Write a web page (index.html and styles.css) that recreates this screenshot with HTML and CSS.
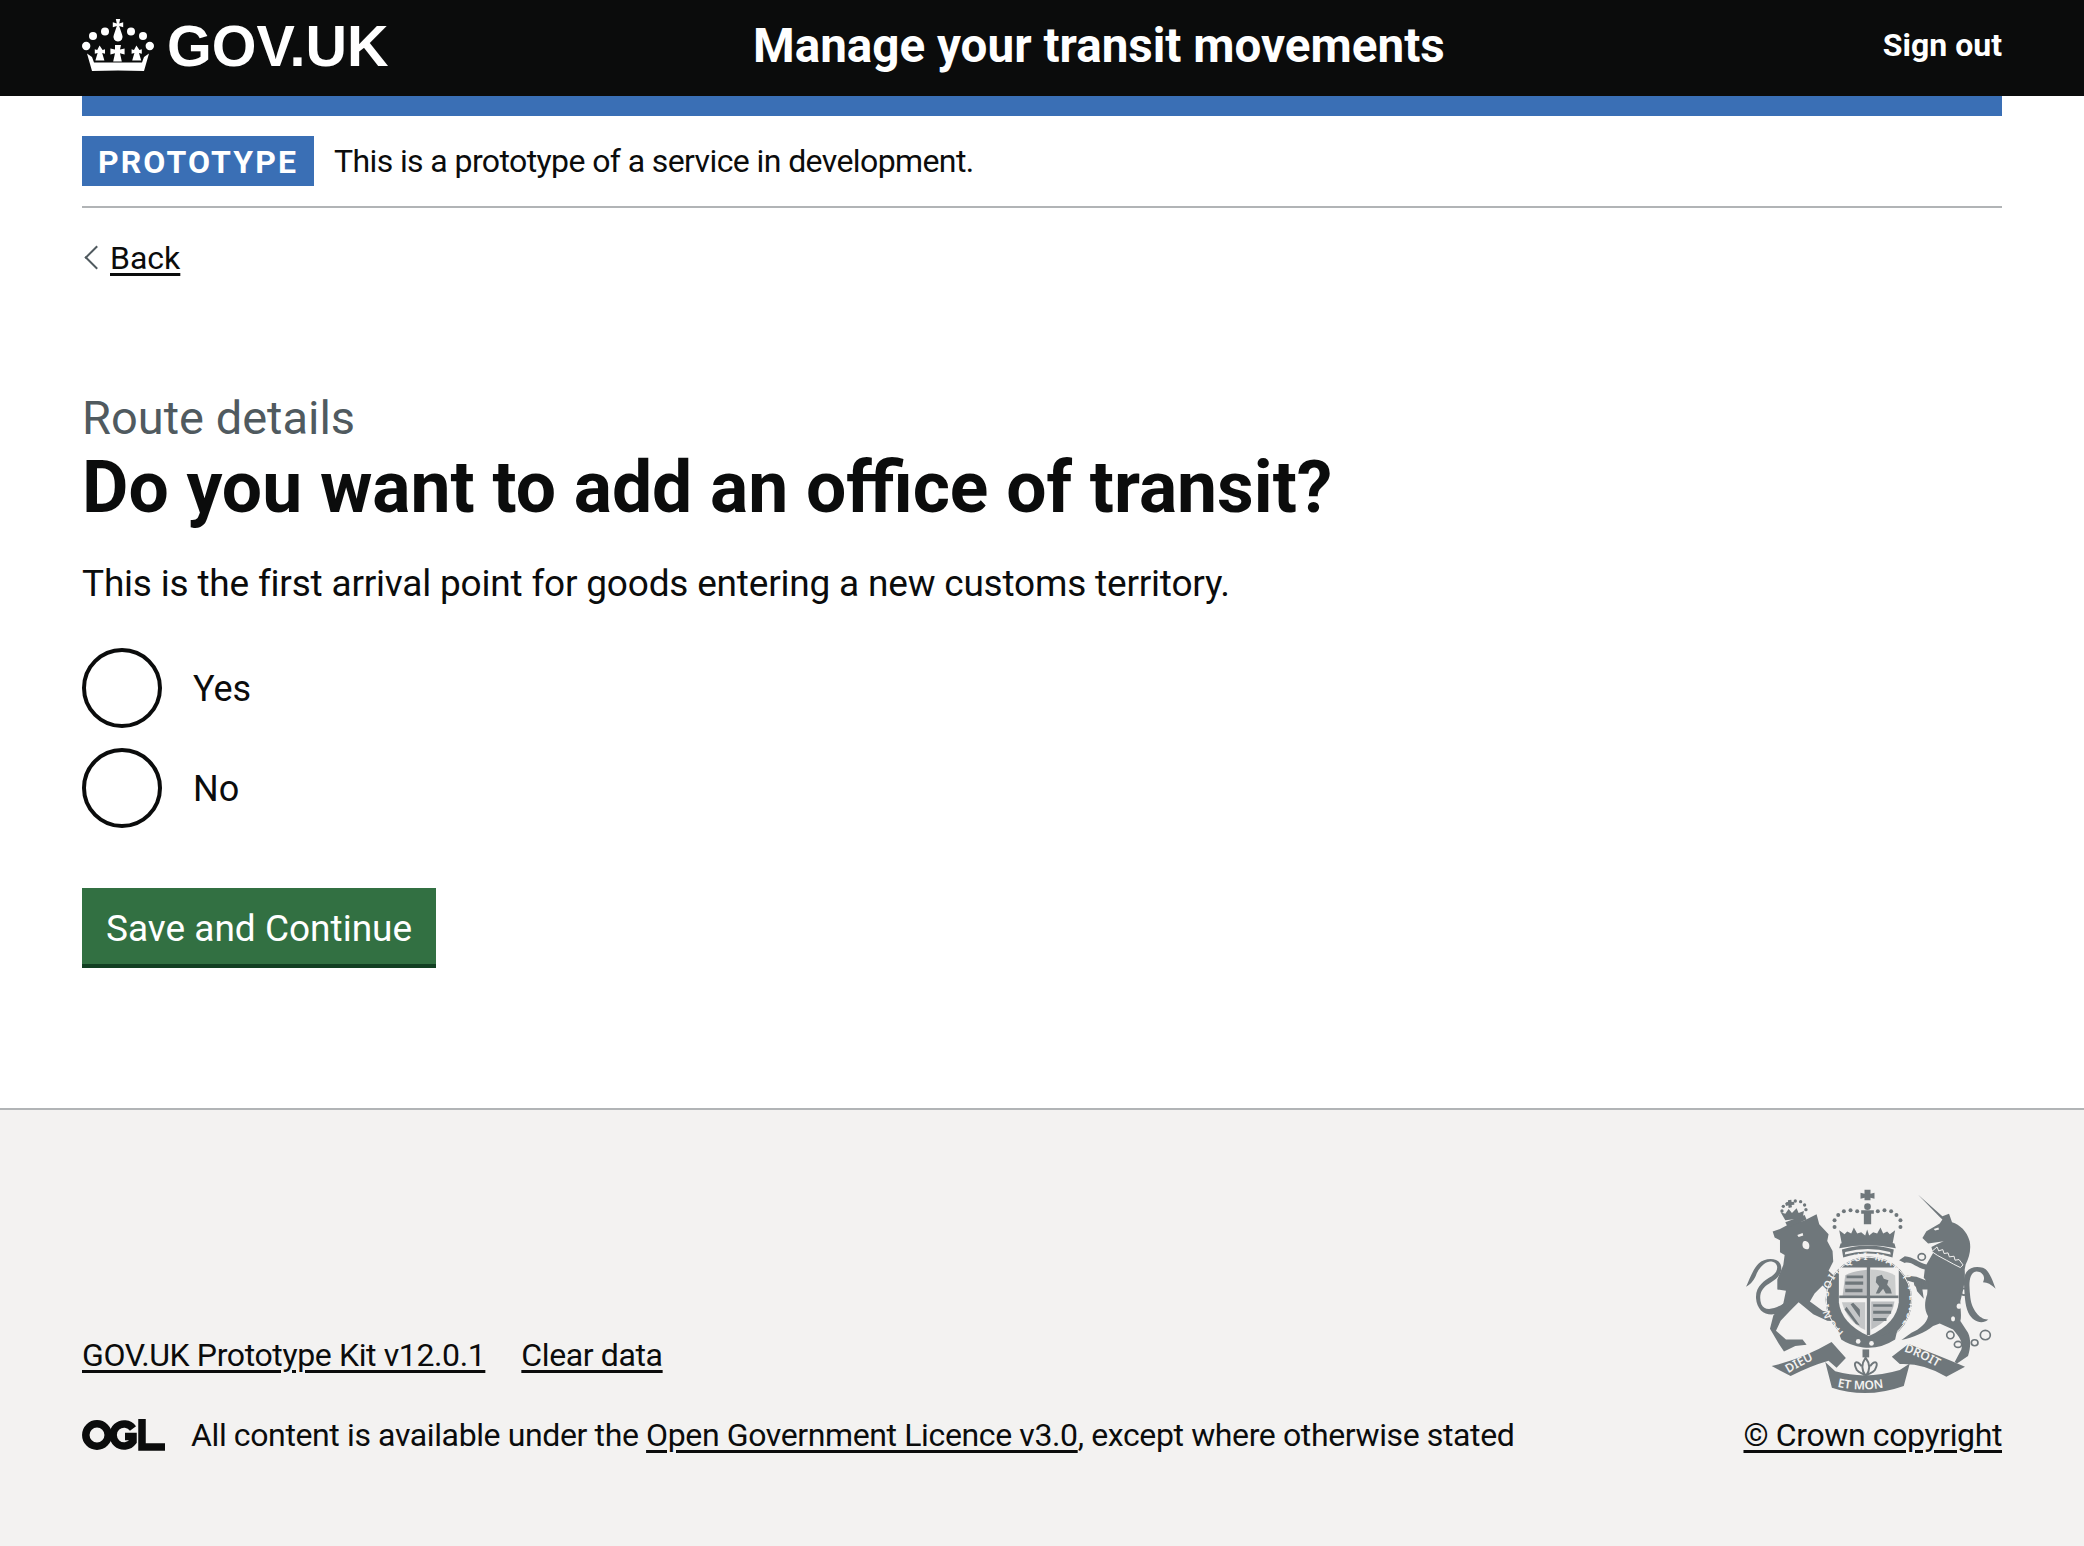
FILE: index.html
```html
<!DOCTYPE html>
<html>
<head>
	<title>Do you want to add an office of transit?</title>
	<link rel="stylesheet" href="styles.css">
</head>
<body>
	<header class="header">
		<div class="header-inner">
			<a class="logo" href="#">
				<svg class="crown" viewBox="0 0 72 54" width="72" height="54" aria-hidden="true">
					<g fill="#fff">
						<circle cx="4.2" cy="27" r="4.2"/><circle cx="11" cy="17" r="4"/><circle cx="23" cy="12.5" r="4"/>
						<circle cx="49" cy="12.5" r="4"/><circle cx="61" cy="17" r="4"/><circle cx="67.8" cy="27" r="4.2"/>
						<path d="M33.8 0h4.4l-1 4.4 4-1.2v5l-4-1.2 3 9a4.6 4.6 0 1 1-8.4 0l3-9-4 1.2v-5l4 1.2z"/>
						<path d="M33 26h6l-1 4.6 4.6-1.2v6l-4.6-1.2 1.8 8.4h-8.6l1.8-8.4-4.6 1.2v-6l4.6 1.2z"/>
						<path d="M17.6 26.5l3 4.6 2.4-.8v4.4l-2.8-.6 2.2 7.4h-9l2.2-7.4-2.8.6v-4.4l2.4.8z"/>
						<path d="M54.4 26.5l3 4.6 2.4-.8v4.4l-2.8-.6 2.2 7.4h-9l2.2-7.4-2.8.6v-4.4l2.4.8z"/>
						<path d="M5 34.5l5 3.6 2 5.4h48l2-5.4 5-3.6-5 17.5q-26-1-52 0z"/>
					</g>
				</svg>
				<span class="logo-text">GOV.UK</span>
			</a>
			<a class="service-name" href="#">Manage your transit movements</a>
			<a class="sign-out" href="#">Sign out</a>
		</div>
	</header>

	<div class="container">
		<div class="header-bar"></div>
		<div class="phase-banner">
			<strong class="tag">PROTOTYPE</strong>
			<span class="phase-text">This is a prototype of a service in development.</span>
		</div>
		<a class="back-link" href="#">Back</a>

		<main class="main">
			<span class="caption">Route details</span>
			<h1 class="heading">Do you want to add an office of transit?</h1>
			<p class="hint">This is the first arrival point for goods entering a new customs territory.</p>
			<form class="radios" action="#">
				<label class="radio"><input type="radio" name="add-office"><span>Yes</span></label>
				<label class="radio"><input type="radio" name="add-office"><span>No</span></label>
				<button class="button" type="submit">Save and Continue</button>
			</form>
		</main>
	</div>

	<footer class="footer">
		<div class="footer-inner">
			<div class="footer-meta">
				<div class="footer-links">
					<a href="#">GOV.UK Prototype Kit v12.0.1</a>
					<a href="#">Clear data</a>
				</div>
				<div class="licence">
					<svg class="ogl" viewBox="0 0 83 32" width="83" height="32" aria-hidden="true">
						<g fill="none" stroke="#0b0c0c" stroke-width="7.5">
							<circle cx="15" cy="16" r="11.2"/>
							<path d="M51 9.5a11 11 0 1 0 0 13v-5h-8"/>
							<path d="M60 0v28h23"/>
						</g>
					</svg>
					<span>All content is available under the <a href="#">Open Government Licence v3.0</a>, except where otherwise stated</span>
				</div>
			</div>
			<div class="crest-col">
				<svg class="crest" viewBox="70 55 770 625" width="257" height="208" aria-hidden="true">
					<defs>
						<path id="garter-line" d="M372 488A122 122 0 1 1 530 482"/>
						<path id="dieu-line" d="M205 612Q260 578 325 552"/>
						<path id="mon-line" d="M352 652Q440 672 535 644"/>
						<path id="droit-line" d="M552 546Q620 570 685 614"/>
					</defs>

					<g fill="#6f777b">
						<!-- lion -->
						<path d="M180 178l34-18 36-6 40-20 8 30 28 30-4 20 16 30 2 32-14 28 32 30 22 46-6 28-24-2-20-36-22-22-24 24-14 24 38 28 36 8 20 10-6 14-36-2-42-20-44-36-24 24-30 32-14 30 30 26 50 0 12 16-34 4-34 16-16-24-26-44 10-40 30-36 8-38-26-4 0-30 18-44 4-30-14-8 0-36-16-8-6-18z"/>
						<!-- lion crown -->
						<path d="M196 158l58-22 6 14-56 24z"/>
						<path d="M196 152l-14-24 14 4 10-14 10 12 14-14 6 14 16-6-4 22z"/>
						<path d="M204 92l10-2 1 7 8-1v9l-8 1 1 7-10 2-1-8-7 2-2-9 8-2z"/>
						<circle cx="186" cy="124" r="5"/><circle cx="190" cy="110" r="5"/><circle cx="202" cy="102" r="5"/><circle cx="226" cy="94" r="5"/><circle cx="242" cy="96" r="5"/><circle cx="254" cy="106" r="5"/><circle cx="258" cy="120" r="5"/>

						<!-- royal crown -->
						<path d="M434 60h18v12l12-3v18l-12-3v8h-18v-8l-12 3v-18l12 3z"/>
						<circle cx="443" cy="111" r="10"/>
						<path d="M424 122h38v10h-8v32h-22v-32h-8z"/>
						<path d="M366 224l-8-42 16 12 8-8 12 6 8-18 10 18 12-4 12 10 6-18 6 18 12-10 12 4 10-18 8 18 12-6 8 8 16-12-8 42z"/>
						<path d="M362 222q82-22 162 0l4 14q-84-18-170 0z"/>
						<path d="M366 240q78-24 156 0l-4 24q-74-24-148 0zM376 247l-1 8q68-18 138 0l-2-8q-66-18-135 0z" fill-rule="evenodd"/>
						<circle cx="344" cy="172" r="6"/><circle cx="344" cy="152" r="6"/><circle cx="355" cy="136" r="6"/><circle cx="372" cy="125" r="6"/><circle cx="392" cy="122" r="6"/><circle cx="412" cy="125" r="6"/>
						<circle cx="474" cy="125" r="6"/><circle cx="494" cy="122" r="6"/><circle cx="514" cy="125" r="6"/><circle cx="530" cy="136" r="6"/><circle cx="542" cy="152" r="6"/><circle cx="542" cy="172" r="6"/>

						<!-- unicorn -->
						<path d="M595 75L668 140L688 132L697 158C720 165 742 185 750 215C755 240 748 265 738 285L735 300C738 340 728 370 722 395C722 420 726 440 722 455L745 490C755 510 752 540 745 560L712 582L705 578L725 540C730 520 722 505 700 480L660 462L640 470C615 490 580 505 545 512L575 490C600 478 620 462 625 440C612 420 615 395 622 375C625 350 622 335 612 325L615 300C590 295 575 275 555 280L538 272L555 260C580 262 600 280 620 285L640 250L635 232C650 225 660 220 672 215L625 222L608 205L620 185L660 162L668 150L660 142z"/>
						<path d="M625 335L590 322L558 318L552 330L585 340L592 365L612 388L608 360L625 360z"/>
						<!-- unicorn tail -->
						<path d="M733 345C728 300 760 285 790 295C808 302 818 330 828 358C812 342 805 340 790 338C800 320 785 305 770 306C745 310 748 350 752 385C756 420 780 452 806 450C788 466 760 458 746 430C735 405 735 375 733 345z"/>
						<!-- lion tail -->
						<path d="M205 412C165 450 112 440 108 386C106 350 134 332 155 320C178 306 178 276 150 276C130 278 116 300 110 312C104 330 92 345 78 352C88 330 100 296 116 282C136 262 184 262 184 296C184 322 160 334 142 346C122 360 116 380 124 404C134 428 170 420 204 392z"/>

						<!-- ribbons -->
						<path d="M155 590Q250 568 335 518L378 566L350 595L326 574Q270 590 212 620z"/>
						<path d="M316 578L346 606Q440 632 540 602L570 582L552 650Q440 690 336 655z"/>
						<path d="M516 562L566 524Q660 560 736 592L680 622Q610 580 540 584z"/>

						<!-- fleur under the shield -->
						<path d="M428 540h20v24h-20z"/>
					</g>

					<g fill="none" stroke="#6f777b" stroke-width="5">
						<!-- chain -->
						<ellipse cx="606" cy="262" rx="11" ry="10"/><ellipse cx="597" cy="342" rx="12" ry="10"/><ellipse cx="733" cy="367" rx="10" ry="10"/>
						<ellipse cx="692" cy="497" rx="11" ry="11"/><ellipse cx="715" cy="525" rx="11" ry="9"/><ellipse cx="765" cy="520" rx="10" ry="9"/><ellipse cx="797" cy="497" rx="15" ry="14"/>
						<!-- fleur petals -->
						<path stroke-width="6" d="M437 565C420 590 430 610 438 620C446 610 456 590 437 565zM425 590C410 570 398 578 411 602C418 612 430 612 434 618M451 590C466 570 478 578 465 602C458 612 446 612 442 618"/>
					</g>

					<!-- lion and unicorn marks -->
					<g fill="#f3f2f1">
						<path d="M232 196l16-6 2 8-14 4zM254 214c10 0 16 8 14 18s-10 8-16 4-6-22 2-22z"/>
						<path d="M642 178l14-4 2 6-12 3z"/>
						<path d="M636 246l16-14 5 12 12-4 4 12 12-2 4 12 14-2 3 12 12-2 12 16-8 8-20-10-22-12-26-14z" fill="#6f777b" stroke="#f3f2f1" stroke-width="3"/>
						<ellipse cx="718" cy="410" rx="7" ry="8"/><ellipse cx="700" cy="448" rx="6" ry="8"/>
					</g>

					<!-- shield -->
					<circle cx="447" cy="391" r="130" fill="#6f777b"/>
					<circle cx="447" cy="391" r="128" fill="none" stroke="#f3f2f1" stroke-width="3"/>
					<path d="M357 294H537V398Q530 462 447 500Q364 462 357 398z" fill="#f3f2f1"/>
					<g fill="#6f777b">
						<rect x="358" y="378" width="178" height="8"/>
						<rect x="441" y="292" width="10" height="205"/>
						<path d="M368 380l74-1v-78q-46 4-66 16zM364 376h0z" opacity=".42"/>
						<path d="M452 300q50 2 74 18l2 60h-76z" opacity=".3"/>
						<path d="M366 398h70v84q-54-26-70-84z" opacity=".35"/>
						<path d="M454 396h70q-6 54-70 84z" opacity=".42"/>
						<!-- three lions, rows -->
						<path d="M380 318h50v8h-50zM376 336h54v10h-54zM376 358h52v10h-52z"/>
						<path d="M460 404h58v8h-58zM460 424h54v9h-54zM460 446h40v9h-40z"/>
						<!-- rampant lion -->
						<path d="M470 322l16-6 6 12 14 4-4 14 10 12 4 14h-18l-8-14-12 14h-10l10-22-10-12z"/>
						<!-- harp -->
						<path d="M380 412l40 56-12-4-34-44z"/><path d="M392 404l28 40v-24l-20-20z"/>
					</g>

					<!-- buckle end of the garter -->
					<path d="M352 478q40 30 90 28 48 0 92-30l-8 34q-46 30-96 24-40-6-66-24z" fill="#6f777b"/>
					<g fill="#f3f2f1">
						<circle cx="415" cy="516" r="7"/><circle cx="455" cy="522" r="7"/>
					</g>

					<!-- motto, set in type rather than outlines -->
					<g class="crest-motto" fill="#f3f2f1">
						<text class="crest-garter"><textPath href="#garter-line" textLength="570" lengthAdjust="spacing">HONI SOIT QUI MAL Y PENSE</textPath></text>
						<text class="crest-scroll"><textPath href="#dieu-line">DIEU</textPath></text>
						<text class="crest-scroll"><textPath href="#mon-line">ET MON</textPath></text>
						<text class="crest-scroll"><textPath href="#droit-line">DROIT</textPath></text>
					</g>
				</svg>
				<a class="copyright" href="#">© Crown copyright</a>
			</div>
		</div>
	</footer>
</body>
</html>
```
FILE: styles.css
```css
/* Service page, GOV.UK look at 2x */
* {
	box-sizing: border-box;
}

body {
	margin: 0;
	min-height: 1546px;
	display: flex;
	flex-direction: column;
	font-family: Roboto, Arial, sans-serif;
	font-size: 37px;
	line-height: 50px;
	color: #0b0c0c;
	background: #fff;
}

a {
	color: #0b0c0c;
	text-decoration: underline;
	text-decoration-thickness: 3px;
	text-underline-offset: 4px;
}

/* header */
.header {
	background-color: #0b0c0c;
	height: 96px;
	padding: 0 82px;
}

.header-inner {
	display: flex;
	align-items: center;
	height: 96px;
}

.logo {
	display: flex;
	align-items: center;
	gap: 13px;
	width: 671px;
	padding-bottom: 4px;
	color: #fff;
	text-decoration: none;
}

.logo-text {
	font-family: "Liberation Sans", Arial, sans-serif;
	font-weight: 700;
	font-size: 57.5px;
	line-height: 60px;
}

.service-name {
	padding-bottom: 4px;
	font-size: 47.6px;
	font-weight: 700;
	color: #fff;
	text-decoration: none;
}

.sign-out {
	margin-left: auto;
	padding-bottom: 6px;
	font-size: 32px;
	font-weight: 700;
	color: #fff;
	text-decoration: none;
}

/* page */
.container {
	padding: 0 82px;
	flex: 1;
}

.header-bar {
	height: 20px;
	background-color: #3a6fb5;
}

.phase-banner {
	display: flex;
	align-items: center;
	gap: 20px;
	padding: 20px 0;
	border-bottom: 2px solid #b1b4b6;
}

.tag {
	display: block;
	padding: 0 16px;
	height: 50px;
	line-height: 52px;
	background-color: #3a6fb5;
	color: #fff;
	font-size: 32px;
	font-weight: 700;
	letter-spacing: 2.1px;
}

.phase-text {
	font-size: 32px;
	letter-spacing: -0.6px;
}

.back-link {
	display: inline-block;
	position: relative;
	margin-top: 30px;
	margin-left: 28px;
	font-size: 32px;
	line-height: 40px;
}

.back-link::before {
	content: "";
	position: absolute;
	left: -22px;
	top: 11px;
	width: 15px;
	height: 15px;
	border-left: 2px solid #505a5f;
	border-bottom: 2px solid #505a5f;
	transform: rotate(45deg);
}

.main {
	padding-top: 111px;
}

.caption {
	display: block;
	font-size: 47px;
	line-height: 50px;
	color: #505a5f;
}

.heading {
	margin: 5px 0 31px;
	font-size: 71.4px;
	line-height: 80px;
	font-weight: 700;
}

.hint {
	margin: 0 0 39px;
	letter-spacing: -0.2px;
}

.radios {
	display: block;
}

.radio {
	display: flex;
	align-items: center;
	gap: 31px;
	margin-bottom: 20px;
}

.radio span {
	padding-top: 2px;
	font-size: 36px;
}

.radio input {
	appearance: none;
	margin: 0;
	width: 80px;
	height: 80px;
	border: 4px solid #0b0c0c;
	border-radius: 50%;
	background: #fff;
}

.button {
	display: block;
	margin-top: 60px;
	padding: 0 24px;
	height: 80px;
	border: 0;
	box-shadow: inset 0 -4px 0 #123f22;
	background-color: #327042;
	color: #fff;
	font-family: inherit;
	font-size: 37px;
	cursor: pointer;
}

/* footer */
.footer {
	height: 438px;
	padding: 78px 82px 0;
	background-color: #f3f2f1;
	border-top: 2px solid #b1b4b6;
	font-size: 32px;
	letter-spacing: -0.38px;
}

.footer-inner {
	display: flex;
	justify-content: space-between;
	align-items: flex-end;
}

.footer-links {
	display: flex;
	gap: 36px;
	margin-bottom: 30px;
}

.licence {
	display: flex;
	align-items: center;
	gap: 26px;
}

.crest-col {
	display: flex;
	flex-direction: column;
	align-items: flex-end;
	gap: 14px;
}

.crest {
	display: block;
	margin-right: 2px;
}

.crest-motto {
	font-family: "Noto Sans", Arial, sans-serif;
	font-weight: 600;
	letter-spacing: 0;
}

.crest-garter {
	font-size: 30px;
}

.crest-scroll {
	font-size: 36px;
}
```
